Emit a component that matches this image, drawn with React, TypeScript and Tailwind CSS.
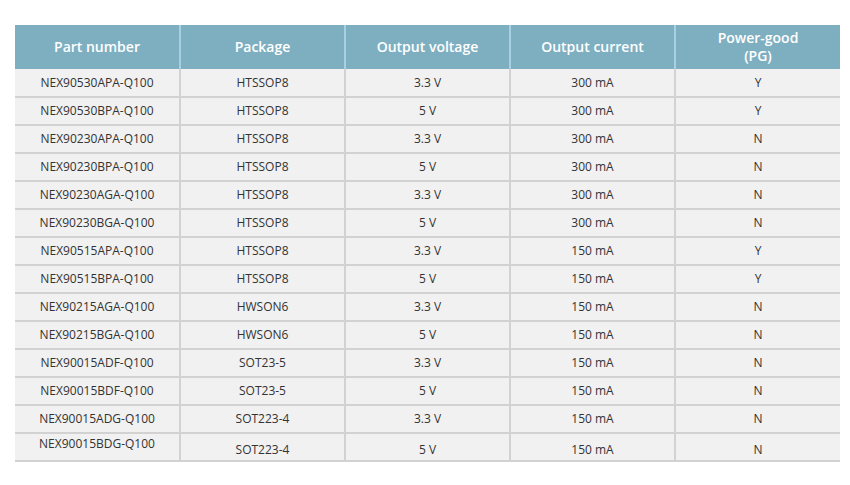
const rows: [string, string, string, string, string][] = [
  ["NEX90530APA-Q100", "HTSSOP8", "3.3 V", "300 mA", "Y"],
  ["NEX90530BPA-Q100", "HTSSOP8", "5 V", "300 mA", "Y"],
  ["NEX90230APA-Q100", "HTSSOP8", "3.3 V", "300 mA", "N"],
  ["NEX90230BPA-Q100", "HTSSOP8", "5 V", "300 mA", "N"],
  ["NEX90230AGA-Q100", "HTSSOP8", "3.3 V", "300 mA", "N"],
  ["NEX90230BGA-Q100", "HTSSOP8", "5 V", "300 mA", "N"],
  ["NEX90515APA-Q100", "HTSSOP8", "3.3 V", "150 mA", "Y"],
  ["NEX90515BPA-Q100", "HTSSOP8", "5 V", "150 mA", "Y"],
  ["NEX90215AGA-Q100", "HWSON6", "3.3 V", "150 mA", "N"],
  ["NEX90215BGA-Q100", "HWSON6", "5 V", "150 mA", "N"],
  ["NEX90015ADF-Q100", "SOT23-5", "3.3 V", "150 mA", "N"],
  ["NEX90015BDF-Q100", "SOT23-5", "5 V", "150 mA", "N"],
  ["NEX90015ADG-Q100", "SOT223-4", "3.3 V", "150 mA", "N"],
  ["NEX90015BDG-Q100", "SOT223-4", "5 V", "150 mA", "N"],
];

const headers = ["Part number", "Package", "Output voltage", "Output current"];

export default function App() {
  return (
    <div
      className="w-[850px] h-[485px] bg-white pt-[25px] px-[15px]"
      style={{ fontFamily: '"Open Sans", "Noto Sans", sans-serif' }}
    >
      <table className="w-[825px] table-fixed border-collapse">
        <thead>
          <tr className="h-[44px] bg-[#7eafc1] text-white text-[14px]">
            {headers.map((h) => (
              <th key={h} className="font-semibold border-r-2 border-[#a9d0e0] leading-[18px]">
                {h}
              </th>
            ))}
            <th className="font-semibold leading-[18px]">
              Power-good
              <br />
              (PG)
            </th>
          </tr>
        </thead>
        <tbody>
          {rows.map((r, i) => {
            const last = i === rows.length - 1;
            return (
              <tr key={r[0]} className="h-[28px] bg-[#f1f1f1] text-[12px] text-[#333] border-b-2 border-[#d2d2d2]">
                {r.map((c, j) => (
                  <td
                    key={j}
                    className={
                      "text-center p-0 " +
                      (j < 4 ? "border-r-2 border-[#d2d2d2] " : "") +
                      (last && j === 0 ? "align-top pt-[1px]" : "") +
                      (last && j > 0 ? "pt-[5px]" : "")
                    }
                  >
                    {c}
                  </td>
                ))}
              </tr>
            );
          })}
        </tbody>
      </table>
    </div>
  );
}
